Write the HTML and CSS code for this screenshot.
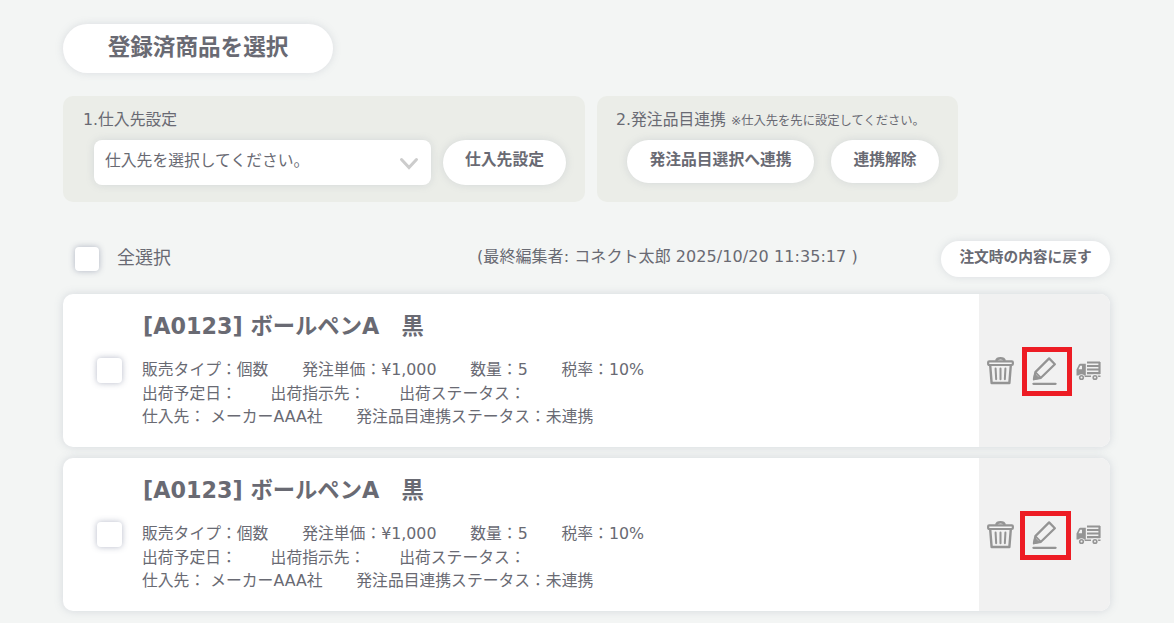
FILE: index.html
```
<!DOCTYPE html>
<html lang="ja">
<head>
  <meta charset="UTF-8" />
  <meta name="viewport" content="width=device-width, initial-scale=1" />
  <title>登録済商品を選択</title>
  <link rel="stylesheet" href="styles.css">
</head>
<body>
  <!-- shared icons -->
  <svg class="icon-defs" width="0" height="0">
    <symbol id="icon-trash" viewBox="0 0 28 29">
      <path d="M9.500 4.500C10.500 1 17.500 1 18.500 4.500" fill="none" stroke="currentColor" stroke-width="2.500" />
      <rect x="1.200" y="5" width="25.600" height="3.800" rx="1" fill="#f5f5f5" stroke="currentColor" stroke-width="2.300" />
      <path d="M3.300 9l1.500 18.500h18.400L24.700 9" fill="none" stroke="currentColor" stroke-width="2.500" stroke-linejoin="round" />
      <path d="M8.900 12.500l.6 11M14 12.500v11M19.100 12.500l-.6 11" fill="none" stroke="currentColor" stroke-width="2.100" stroke-linecap="round" />
    </symbol>
    <symbol id="icon-edit" viewBox="0 0 26 30">
      <path d="M2 23.600L3.500 16.200 17.800 1.900 23.800 7.900 9.300 22.100z" fill="none" stroke="currentColor" stroke-width="2.300" stroke-linejoin="round" />
      <path d="M3.500 16.200L9.300 22.100M2 23.600l1-4.800 3.700 3.700z" fill="currentColor" stroke="currentColor" stroke-width="1.800" stroke-linejoin="round" />
      <path d="M1.500 28.300h23" stroke="currentColor" stroke-width="2.400" stroke-linecap="round" />
    </symbol>
    <symbol id="icon-truck" viewBox="0 0 25 20">
      <path fill="currentColor" fill-rule="evenodd" d="M.5 14.500V8.500L3 3.500q.4-.8 1.300-.8H9.800v11.800zM2.500 8.300H6V4.700H4.200z" />
      <path d="M11 1.500h13M11 5h13M11 8.500h13M11 12.200h13M23.500 1v12" fill="none" stroke="currentColor" stroke-width="2.200" />
      <path d="M8 15.300h7M20 15.300h4.500" stroke="currentColor" stroke-width="1.500" />
      <circle cx="5.500" cy="16.500" r="3.300" fill="#f0f0f0" />
      <circle cx="19" cy="16.500" r="3.300" fill="#f0f0f0" />
      <circle cx="5.500" cy="16.500" r="1.800" fill="none" stroke="currentColor" stroke-width="1.600" />
      <circle cx="19" cy="16.500" r="1.800" fill="none" stroke="currentColor" stroke-width="1.600" />
    </symbol>
  </svg>

  <button class="btn btn-main">登録済商品を選択</button>

  <div class="panels">
    <div class="panel panel-supplier">
      <div class="panel-title">1.仕入先設定</div>
      <div class="panel-row">
        <div class="select">
          <span>仕入先を選択してください。</span>
          <svg class="chevron" width="20" height="13" viewBox="0 0 20 13"><path d="M2.500 2.500l7.500 8 7.500-8" fill="none" stroke="#cccccc" stroke-width="3" stroke-linecap="round" /></svg>
        </div>
        <button class="btn btn-supplier">仕入先設定</button>
      </div>
    </div>
    <div class="panel panel-link">
      <div class="panel-title">2.発注品目連携 <span class="note">※仕入先を先に設定してください。</span></div>
      <div class="panel-row">
        <button class="btn btn-link">発注品目選択へ連携</button>
        <button class="btn btn-unlink">連携解除</button>
      </div>
    </div>
  </div>

  <div class="toolbar">
    <span class="check check-all"></span>
    <span class="all-label">全選択</span>
    <span class="editor">(最終編集者: コネクト太郎 2025/10/20 11:35:17 )</span>
    <button class="btn btn-reset">注文時の内容に戻す</button>
  </div>

  <div class="card">
    <span class="check"></span>
    <div class="info">
      <h2>[A0123] ボールペンA　黒</h2>
      <p><span>販売タイプ：個数</span><span>発注単価：¥1,000</span><span>数量：5</span><span>税率：10%</span></p>
      <p><span>出荷予定日：</span><span>出荷指示先：</span><span>出荷ステータス：</span></p>
      <p><span>仕入先： メーカーAAA社</span><span>発注品目連携ステータス：未連携</span></p>
    </div>
    <div class="actions">
      <svg class="trash"><use href="#icon-trash" /></svg>
      <span class="edit">
        <svg><use href="#icon-edit" /></svg>
        <span class="mark"></span>
      </span>
      <svg class="truck"><use href="#icon-truck" /></svg>
    </div>
  </div>

  <div class="card">
    <span class="check"></span>
    <div class="info">
      <h2>[A0123] ボールペンA　黒</h2>
      <p><span>販売タイプ：個数</span><span>発注単価：¥1,000</span><span>数量：5</span><span>税率：10%</span></p>
      <p><span>出荷予定日：</span><span>出荷指示先：</span><span>出荷ステータス：</span></p>
      <p><span>仕入先： メーカーAAA社</span><span>発注品目連携ステータス：未連携</span></p>
    </div>
    <div class="actions">
      <svg class="trash"><use href="#icon-trash" /></svg>
      <span class="edit">
        <svg><use href="#icon-edit" /></svg>
        <span class="mark mark-wide"></span>
      </span>
      <svg class="truck"><use href="#icon-truck" /></svg>
    </div>
  </div>
</body>
</html>
```

FILE: styles.css
```
* {
  box-sizing: border-box;
}

body {
  margin: 0;
  padding: 24px 64px 0 63px;
  height: 623px;
  overflow: hidden;
  background: #f3f5f4;
  color: #696a73;
  font-family: "DejaVu Sans", "Noto Sans CJK JP", sans-serif;
  font-size: 15.8px;
}

.icon-defs {
  position: absolute;
}

/* Buttons */
.btn {
  display: block;
  border: none;
  border-radius: 30px;
  padding: 0 0 4px;
  background: #fff;
  color: #696a73;
  font-family: inherit;
  font-size: 15.8px;
  font-weight: bold;
  line-height: 1;
  white-space: nowrap;
  box-shadow: 0 0 8px rgba(120, 130, 150, 0.2);
  cursor: pointer;
}

.btn-main {
  width: 270px;
  height: 49px;
  padding-bottom: 3px;
  font-size: 22.6px;
}

.btn-supplier {
  width: 123px;
  height: 45px;
  padding-bottom: 6px;
}

.btn-link {
  width: 187px;
  height: 43px;
}

.btn-unlink {
  width: 108px;
  height: 43px;
}

.btn-reset {
  width: 169px;
  height: 36px;
  margin-left: auto;
  padding-bottom: 3px;
  font-size: 14.7px;
}

/* Setting panels */
.panels {
  display: flex;
  gap: 12px;
  margin-top: 23px;
}

.panel {
  height: 106px;
  border-radius: 10px;
  background: #ebede8;
}

.panel-supplier {
  width: 522px;
  padding: 12px 19px 0 20px;
}

.panel-link {
  width: 361px;
  padding: 12px 19px 0 19px;
}

.panel-title {
  height: 32px;
  line-height: 24px;
  white-space: nowrap;
}

.note {
  font-size: 12.3px;
}

.panel-row {
  display: flex;
  gap: 12px;
  padding-left: 11px;
}

.panel-link .panel-row {
  gap: 17px;
}

.select {
  display: flex;
  align-items: center;
  justify-content: space-between;
  width: 337px;
  height: 45px;
  padding: 0 12px 6px 11px;
  border-radius: 8px;
  background: #fff;
  box-shadow: 0 0 8px rgba(120, 130, 150, 0.2);
}

.chevron {
  margin-top: 7px;
}

/* Toolbar */
.toolbar {
  display: flex;
  align-items: center;
  height: 36px;
  margin-top: 39px;
}

.check {
  flex: none;
  width: 25px;
  height: 25px;
  border-radius: 4px;
  background: #fff;
  box-shadow: 0 0 6px rgba(90, 100, 130, 0.45);
}

.check-all {
  width: 24px;
  height: 24px;
  margin-left: 12px;
}

.all-label {
  width: 360px;
  margin-left: 18px;
  padding-bottom: 6px;
  font-size: 18px;
}

.editor {
  padding-bottom: 9px;
  font-size: 16px;
  letter-spacing: 0.07px;
  white-space: nowrap;
}

/* Item cards */
.card {
  display: flex;
  height: 153px;
  margin-top: 17px;
  border-radius: 10px;
  background: #fff;
  box-shadow: 0 0 8px rgba(120, 130, 150, 0.25);
  overflow: hidden;
}

.card + .card {
  margin-top: 11px;
}

.card .check {
  margin: 64px 20px 0 34px;
}

.info {
  flex: 1;
  padding-top: 15px;
  white-space: nowrap;
}

.info h2 {
  height: 49px;
  margin: 0;
  padding-left: 1px;
  font-size: 22.3px;
  line-height: 34px;
}

.info p {
  display: flex;
  gap: 33.8px;
  margin: 0;
  line-height: 23.6px;
}

/* Action icons */
.actions {
  display: flex;
  align-items: center;
  width: 131px;
  padding-left: 8px;
  background: #f1f1f1;
  color: #949494;
}

.trash {
  width: 27px;
  height: 29px;
}

.edit {
  position: relative;
  display: flex;
  margin: 0 18.5px 0 18px;
}

.edit svg {
  width: 25px;
  height: 30px;
}

.truck {
  width: 25px;
  height: 20px;
}

.mark {
  position: absolute;
  top: -9px;
  left: -10px;
  width: 50px;
  height: 49px;
  border: 5px solid #ed1c24;
}

.mark-wide {
  left: -12px;
  width: 51px;
}
```
